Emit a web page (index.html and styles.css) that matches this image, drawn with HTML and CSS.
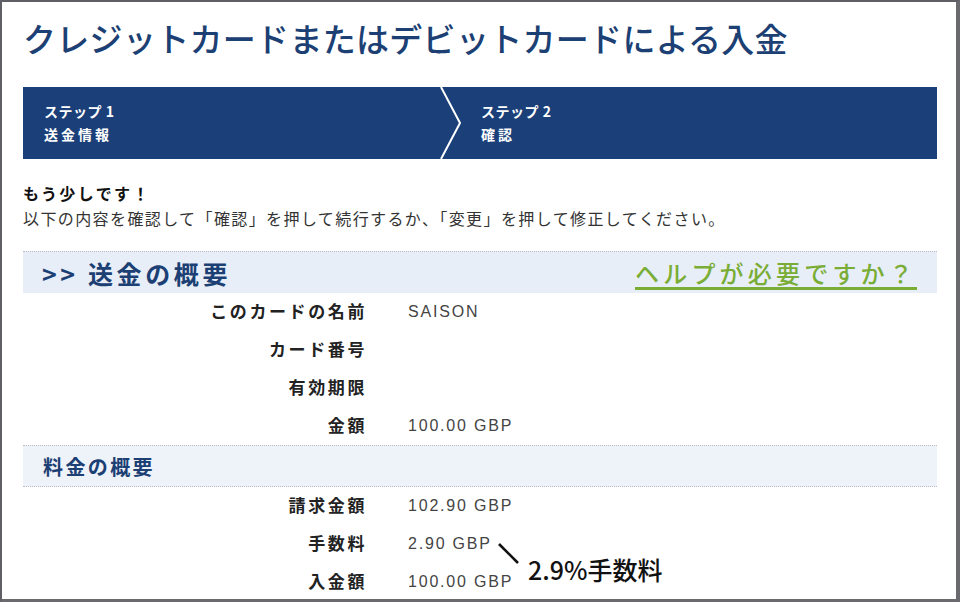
FILE: index.html
```html
<!DOCTYPE html>
<html lang="ja">
<head>
<meta charset="utf-8">
<title>入金</title>
<link rel="stylesheet" href="styles.css">
</head>
<body>
<div class="frame">
  <h1 class="title">クレジットカードまたはデビットカードによる入金</h1>

  <div class="steps">
    <div class="step step-first">
      <div class="step-no">ステップ 1</div>
      <div class="step-name">送金情報</div>
    </div>
    <svg class="chevron" width="24" height="72" viewBox="0 0 24 72">
      <polyline points="2,0 21,36 2,72" fill="none" stroke="#ffffff" stroke-width="2"/>
    </svg>
    <div class="step step-second">
      <div class="step-no">ステップ 2</div>
      <div class="step-name">確認</div>
    </div>
  </div>

  <div class="notice">
    <div class="notice-head">もう少しです！</div>
    <div class="notice-text">以下の内容を確認して「確認」を押して続行するか、「変更」を押して修正してください。</div>
  </div>

  <div class="section-head">
    <div class="section-title">&gt;&gt; 送金の概要</div>
    <a class="help" href="#">ヘルプが必要ですか？</a>
  </div>

  <div class="rows">
    <div class="row"><div class="label">このカードの名前</div><div class="value">SAISON</div></div>
    <div class="row"><div class="label">カード番号</div><div class="value"></div></div>
    <div class="row"><div class="label">有効期限</div><div class="value"></div></div>
    <div class="row"><div class="label">金額</div><div class="value">100.00 GBP</div></div>
  </div>

  <div class="sub-head">料金の概要</div>

  <div class="rows">
    <div class="row"><div class="label">請求金額</div><div class="value">102.90 GBP</div></div>
    <div class="row row-note">
      <div class="label">手数料</div>
      <div class="value">2.90 GBP</div>
      <div class="note">
        <svg class="note-line" width="24" height="24" viewBox="0 0 24 24">
          <line x1="2" y1="2" x2="21" y2="21" stroke="#111" stroke-width="2.6"/>
        </svg>
        <span class="note-text">2.9%手数料</span>
      </div>
    </div>
    <div class="row"><div class="label">入金額</div><div class="value">100.00 GBP</div></div>
  </div>
</div>
</body>
</html>
```

FILE: styles.css
```css
html, body {
  margin: 0;
  padding: 0;
  background: #ffffff;
}

.frame {
  width: 960px;
  height: 602px;
  box-sizing: border-box;
  border-top: 2px solid #5f5f66;
  border-left: 2px solid #5f5f66;
  border-right: 4px solid #6a6a6e;
  border-bottom: 3px solid #6a6a6e;
  padding: 16px 19px 0 21px;
  overflow: hidden;
  font-family: "Noto Sans CJK JP", "Noto Sans", sans-serif;
  color: #222;
}

.title {
  margin: 0 0 29px 0;
  font-size: 33px;
  line-height: 40px;
  font-weight: 500;
  letter-spacing: 0.3px;
  color: #1c3f74;
  white-space: nowrap;
}

.steps {
  display: flex;
  align-items: stretch;
  height: 72px;
  background: #1b3f79;
  color: #ffffff;
}

.step {
  display: flex;
  flex-direction: column;
  justify-content: center;
  font-size: 14px;
  line-height: 23px;
  font-weight: 700;
}

.step-first {
  width: 395px;
  padding-left: 21px;
}

.chevron {
  display: block;
  flex: none;
}

.step-second {
  padding-left: 18px;
}

.step-no {
  letter-spacing: 0.5px;
}

.step-name {
  letter-spacing: 3px;
}

.notice {
  margin-top: 22px;
  font-size: 16px;
  line-height: 25px;
}

.notice-head {
  font-weight: 700;
  letter-spacing: 2.4px;
  color: #111;
}

.notice-text {
  letter-spacing: 1.4px;
  color: #333;
  white-space: nowrap;
}

.section-head {
  margin-top: 20px;
  height: 42px;
  box-sizing: border-box;
  border-top: 1px dotted #b9bcc4;
  background: #e8eef8;
  display: flex;
  align-items: center;
  justify-content: space-between;
  padding: 0 20px 0 19px;
}

.section-title {
  font-size: 25px;
  font-weight: 700;
  letter-spacing: 3.6px;
  color: #1c3f74;
  line-height: 40px;
}

.help {
  font-size: 24px;
  line-height: 36px;
  font-weight: 500;
  letter-spacing: 4.2px;
  color: #7aad35;
  text-decoration: underline;
  text-decoration-thickness: 3px;
  text-underline-offset: 4px;
  text-decoration-color: #7aad35;
}

.rows {
  display: flex;
  flex-direction: column;
}

.row {
  display: grid;
  grid-template-columns: 344px auto;
  column-gap: 41px;
  height: 38px;
  align-items: center;
  position: relative;
}

.label {
  text-align: right;
  font-size: 17px;
  line-height: 22px;
  margin-top: -3px;
  font-weight: 700;
  letter-spacing: 2.6px;
  color: #222;
}

.value {
  font-family: "Liberation Sans", Arial, sans-serif;
  font-size: 16px;
  letter-spacing: 1.8px;
  color: #444;
}

.sub-head {
  height: 42px;
  box-sizing: border-box;
  border-top: 1px dotted #b9bcc4;
  border-bottom: 1px dotted #b9bcc4;
  background: #eef2f9;
  display: flex;
  align-items: center;
  padding-left: 20px;
  font-size: 20px;
  font-weight: 700;
  letter-spacing: 2.4px;
  color: #1c3f74;
}

.note {
  position: absolute;
  left: 474px;
  top: 17px;
  display: flex;
  align-items: flex-end;
}

.note-line {
  display: block;
}

.note-text {
  margin-left: 7px;
  margin-bottom: -18px;
  font-size: 25px;
  line-height: 30px;
  font-weight: 500;
  color: #111;
  white-space: nowrap;
}
```
